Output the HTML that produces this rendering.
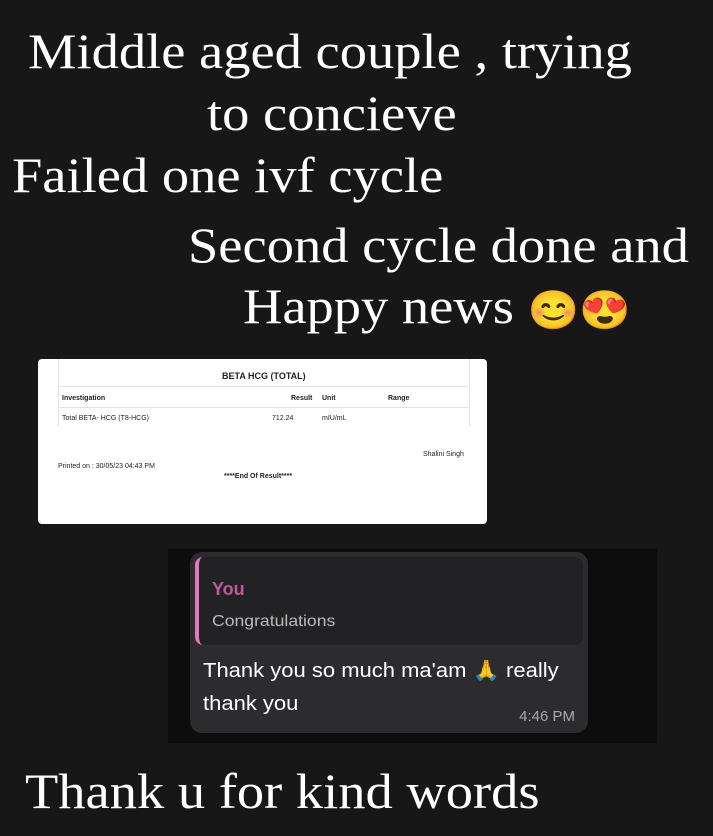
<!DOCTYPE html>
<html><head><meta charset="utf-8"><style>
body{margin:0;width:713px;height:836px;background:#171717;position:relative;overflow:hidden;font-family:"Liberation Serif",serif;color:#fff}
.t{position:absolute;white-space:nowrap;font-size:50px;line-height:1;transform:scaleX(1.09);transform-origin:left top}
.doc{position:absolute;left:38px;top:359px;width:449px;height:165px;background:#fff;border-radius:4px;font-family:"Liberation Sans",sans-serif;color:#222}
.doc div{position:absolute;white-space:nowrap}
.s{font-size:7px}
.chat{position:absolute;left:168px;top:549px;width:489px;height:194px;background:#0d0d0d}
.bub{position:absolute;left:190px;top:552px;width:398px;height:181px;background:#2c2c2e;border-radius:12px;font-family:"Liberation Sans",sans-serif}
.q{position:absolute;left:5px;top:5px;width:388px;height:88px;background:#222224;border-radius:8px;border-left:4px solid #e07ab8;box-sizing:border-box}
.w{white-space:nowrap;transform:scaleX(1.1);transform-origin:left top}
</style></head><body>
<div class="t" style="left:28px;top:26px">Middle aged couple , trying</div>
<div class="t" style="left:207px;top:88px">to concieve</div>
<div class="t" style="left:12px;top:150px">Failed one ivf cycle</div>
<div class="t" style="left:188px;top:220px">Second cycle done and</div>
<div class="t" style="left:243px;top:281px">Happy news <span style="font-family:'Noto Color Emoji',sans-serif;font-size:38px">😊😍</span></div>
<div class="doc">
<div style="left:20px;top:0;width:410px;height:68px;border-left:1px solid #e3e3e3;border-right:1px solid #e3e3e3"></div>
<div style="left:20px;top:27px;width:410px;border-top:1px solid #e3e3e3"></div>
<div style="left:20px;top:48px;width:410px;border-top:1px solid #e3e3e3"></div>
<div style="left:184px;top:12px;font-size:9px;font-weight:bold">BETA HCG (TOTAL)</div>
<div class="s" style="left:24px;top:36px;font-weight:bold">Investigation</div>
<div class="s" style="left:253px;top:36px;font-weight:bold">Result</div>
<div class="s" style="left:284px;top:36px;font-weight:bold">Unit</div>
<div class="s" style="left:350px;top:36px;font-weight:bold">Range</div>
<div class="s" style="left:24px;top:56px">Total BETA- HCG (T8-HCG)</div>
<div class="s" style="left:234px;top:56px">712.24</div>
<div class="s" style="left:284px;top:56px">mIU/mL</div>
<div class="s" style="left:385px;top:92px">Shalini Singh</div>
<div class="s" style="left:20px;top:104px">Printed on : 30/05/23 04:43 PM</div>
<div class="s" style="left:186px;top:114px;font-weight:bold">****End Of Result****</div>
</div>
<div class="chat"></div>
<div class="bub">
<div class="q">
<div style="position:absolute;left:13px;top:22px;font-size:18px;color:#c45a95;font-weight:bold">You</div>
<div class="w" style="position:absolute;left:13px;top:56px;font-size:16px;color:#bbb">Congratulations</div>
</div>
<div class="w" style="position:absolute;left:13px;top:106px;font-size:20px;color:#fff">Thank you so much ma'am 🙏 really</div>
<div class="w" style="position:absolute;left:13px;top:141px;font-size:20px;color:#fff">thank you</div>
<div style="position:absolute;right:13px;top:156px;font-size:15px;color:#aaa">4:46 PM</div>
</div>
<div class="t" style="left:25px;top:766px">Thank u for kind words</div>
</body></html>
